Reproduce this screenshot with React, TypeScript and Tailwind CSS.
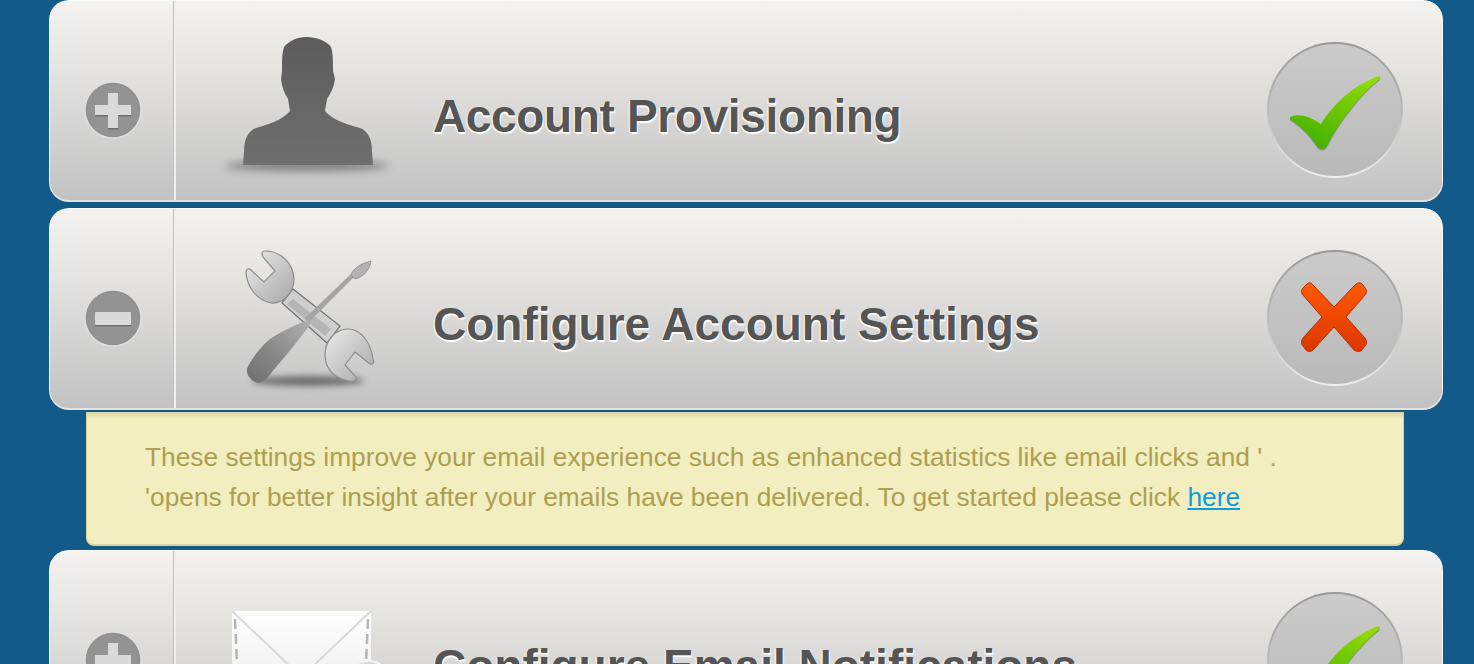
import React from 'react';

const PlusToggle = ({ open }: { open: boolean }) => (
  <svg width="58" height="58" viewBox="0 0 58 58">
    <circle cx="29" cy="29" r="28" fill="#8f8f8f" stroke="#dfdfdf" strokeWidth="1.5" />
    <circle cx="29" cy="29" r="26" fill="#939393" />
    {open ? (
      <g>
        <rect x="11" y="24.5" width="36" height="13" fill="#6f6f6f" rx="1" />
        <rect x="11" y="23" width="36" height="13" fill="#dadada" rx="1" />
      </g>
    ) : (
      <g>
        <path d="M24 12h10v12h13v10H34v13H24V34H11V24h13z" fill="#6f6f6f" transform="translate(0 1.5)" />
        <path d="M24 12h10v12h13v10H34v13H24V34H11V24h13z" fill="#dadada" />
      </g>
    )}
  </svg>
);

const PersonIcon = () => (
  <svg width="258" height="202" viewBox="1 0 258 202">
    <defs>
      <linearGradient id="personFill" x1="0" y1="0" x2="0" y2="1">
        <stop offset="0" stopColor="#5c5c5c" />
        <stop offset="1" stopColor="#6f6f6f" />
      </linearGradient>
      <filter id="personBlur" x="-30%" y="-200%" width="160%" height="500%">
        <feGaussianBlur stdDeviation="4" />
      </filter>
    </defs>
    <ellipse cx="132" cy="165" rx="82" ry="4.5" fill="#555" opacity="0.75" filter="url(#personBlur)" />
    <path
      d="M131 36C141 36 152 40 156 46C158 52 158 60 158 70L160 78C159 86 156 92 152 98L150 110C155 116 165 122 185 127C193 130 197 138 197 150L198 164L68 164L69 150C69 138 73 130 81 127C100 122 110 116 115 110L113 98C109 92 107 86 106 78L107 70C107 60 107 52 109 46C114 40 122 36 131 36Z"
      fill="url(#personFill)"
    />
  </svg>
);

const ToolsIcon = () => (
  <svg width="258" height="202" viewBox="1 0 258 202">
    <defs>
      <linearGradient id="toolMetal" x1="0" y1="0" x2="1" y2="1">
        <stop offset="0" stopColor="#ececec" />
        <stop offset="1" stopColor="#a6a6a6" />
      </linearGradient>
      <linearGradient id="toolHandle" x1="1" y1="0" x2="0" y2="1">
        <stop offset="0" stopColor="#b0b0b0" />
        <stop offset="0.6" stopColor="#858585" />
        <stop offset="1" stopColor="#6f6f6f" />
      </linearGradient>
      <filter id="toolBlur" x="-30%" y="-200%" width="160%" height="500%">
        <feGaussianBlur stdDeviation="3" />
      </filter>
    </defs>
    <ellipse cx="133" cy="172" rx="56" ry="5" fill="#555" opacity="0.8" filter="url(#toolBlur)" />
    <path d="M118 80L165 117L152 134L107 94Z" fill="#cfcfcf" stroke="#6f6f6f" strokeWidth="1.2" />
    <path d="M118 90L156 120L150 127L112 95Z" fill="#b5b5b5" />
    <path
      d="M90 42C106 42 118 54 119 70C119 84 108 95 96 94C84 92 72 80 71 63C71 60 74 59 76 61L89 73L100 62L88 48C86 44 87 42 90 42Z"
      fill="url(#toolMetal)"
      stroke="#8d8d8d"
      strokeWidth="1.2"
    />
    <path
      d="M198 150C200 154 197 156 195 155L180 143L170 156L181 168C182 172 178 173 174 172C160 170 150 160 150 146C150 132 160 120 173 120C186 120 196 134 198 150Z"
      fill="url(#toolMetal)"
      stroke="#8d8d8d"
      strokeWidth="1.2"
    />
    <path d="M130 109L176 65L179 68L134 113Z" fill="#a4a4a4" />
    <path d="M176 66C177 60 187 54 196 52C195 60 189 68 180 70Z" fill="#b2b2b2" stroke="#8c8c8c" strokeWidth="0.8" />
    <path
      d="M133 111C125 114 110 120 95 130C85 138 75 152 72 160C71 166 76 172 83 174C88 174 92 170 97 163C108 150 125 130 136 114Z"
      fill="url(#toolHandle)"
    />
  </svg>
);

const EnvelopeIcon = () => (
  <svg width="258" height="202" viewBox="1 0 258 202">
    <defs>
      <linearGradient id="envelopeFill" x1="0" y1="0" x2="0" y2="1">
        <stop offset="0" stopColor="#ffffff" />
        <stop offset="1" stopColor="#e8e8e8" />
      </linearGradient>
    </defs>
    <rect x="57" y="60" width="139" height="110" fill="url(#envelopeFill)" />
    <path d="M57 60L118 118" stroke="#d8d8d8" strokeWidth="2" fill="none" />
    <path d="M196 60L135 118" stroke="#d8d8d8" strokeWidth="2" fill="none" />
    <path d="M60 68L62 112" stroke="#b5b5b5" strokeWidth="2.5" strokeDasharray="10 5" fill="none" />
    <path d="M193 68L191 112" stroke="#b5b5b5" strokeWidth="2.5" strokeDasharray="10 5" fill="none" />
    <circle cx="193" cy="134" r="24" fill="#d6d6d6" stroke="#f4f4f4" strokeWidth="2" />
  </svg>
);

const CheckMark = () => (
  <svg width="136" height="136" viewBox="0 0 136 136">
    <defs>
      <linearGradient id="checkFill" x1="0.8" y1="0" x2="0.3" y2="1">
        <stop offset="0" stopColor="#8fdc00" />
        <stop offset="1" stopColor="#43b000" />
      </linearGradient>
    </defs>
    <path
      d="M23 75C32 71 42 74 54 82C66 62 88 42 112 34C114 36 112 38 110 39C92 54 72 80 60 104C57 108 53 108 50 104C42 92 34 84 23 77Z"
      fill="#5e6a52"
      opacity="0.55"
      transform="translate(0 1.5)"
    />
    <path
      d="M23 75C32 71 42 74 54 82C66 62 88 42 112 34C114 36 112 38 110 39C92 54 72 80 60 104C57 108 53 108 50 104C42 92 34 84 23 77Z"
      fill="url(#checkFill)"
    />
  </svg>
);

const CrossMark = () => (
  <svg width="136" height="136" viewBox="0 0 136 136">
    <defs>
      <linearGradient id="crossFill" x1="0" y1="0" x2="0" y2="1">
        <stop offset="0" stopColor="#ff5a00" />
        <stop offset="1" stopColor="#dc3700" />
      </linearGradient>
    </defs>
    <path
      d="M46 35L67 57L88 35C91 32 94 32 96 35L98 38C100 40 100 43 98 45L79 67L98 88C100 91 100 94 98 96L95 100C93 102 90 102 87 100L67 77L46 100C43 102 41 102 39 100L36 96C34 94 34 91 36 88L55 67L36 45C34 43 34 40 36 38L39 35C41 32 44 32 46 35Z"
      fill="url(#crossFill)"
      stroke="#b92c00"
      strokeWidth="1"
    />
  </svg>
);

const Row = ({
  title,
  titleClass,
  open,
  done,
  icon,
}: {
  title: string;
  titleClass?: string;
  open: boolean;
  done: boolean;
  icon: React.ReactNode;
}) => (
  <div className="flex h-[202px] w-full shrink-0 rounded-[20px] border-x border-t border-b-2 border-x-[#f7f7f7] border-t-[#fbfbf9] border-b-[#e6e2de] bg-[linear-gradient(#f4f3ef,#e4e3e0_35%,#c2c2c3)] overflow-hidden">
    <div className="h-full w-[123px] shrink-0 pl-[34px] pt-[80px]">
      <PlusToggle open={open} />
    </div>
    <div className="h-full w-px shrink-0 bg-[#c0c0c0]" />
    <div className="h-full w-[2px] shrink-0 bg-[#efefef]" />
    <div className="h-[202px] w-[257px] shrink-0">{icon}</div>
    <div className="flex-1 pt-[85px]">
      <h2
        className={`text-[46px] font-bold leading-[60px] text-[#555555] [text-shadow:1px_2px_1px_#fff,-1px_1px_1px_#fff] ${titleClass ?? ''}`}
      >
        {title}
      </h2>
    </div>
    <div className="mr-[39px] mt-[41px] h-[136px] w-[136px] shrink-0 rounded-full bg-[linear-gradient(#989898,#b9b9b9_50%,#efefef)] p-[2px]">
      <div className="flex h-full w-full items-center justify-center rounded-full bg-[linear-gradient(#cbcbcb,#b9b9b9)]">
        <div className="shrink-0">{done ? <CheckMark /> : <CrossMark />}</div>
      </div>
    </div>
  </div>
);

export default function App() {
  return (
    <div className="flex h-[664px] w-full flex-col overflow-hidden bg-[#125a8a] pl-[49px] pr-[31px] font-['Liberation_Sans',Arial,sans-serif]">
      <Row
        title="Account Provisioning"
        titleClass="tracking-[-0.35px]"
        open={false}
        done
        icon={<PersonIcon />}
      />
      <div className="h-[6px] shrink-0" />
      <Row title="Configure Account Settings" open done={false} icon={<ToolsIcon />} />
      <div className="mb-1 ml-[37px] mt-[2px] h-[134px] w-[1318px] shrink-0 rounded-b-[8px] border-b-2 border-l border-r border-[#d9d39b] bg-[linear-gradient(#d9d4a6,#f2eec0_7px)] pl-[58px] pt-[25px] text-[26.3px] leading-[40px] text-[#ad9f50]">
        <p>These settings improve your email experience such as enhanced statistics like email clicks and ' .</p>
        <p>
          'opens for better insight after your emails have been delivered. To get started please click{' '}
          <a href="#" className="text-[#0d9be0] underline">
            here
          </a>
        </p>
      </div>
      <Row title="Configure Email Notifications" open={false} done icon={<EnvelopeIcon />} />
    </div>
  );
}
